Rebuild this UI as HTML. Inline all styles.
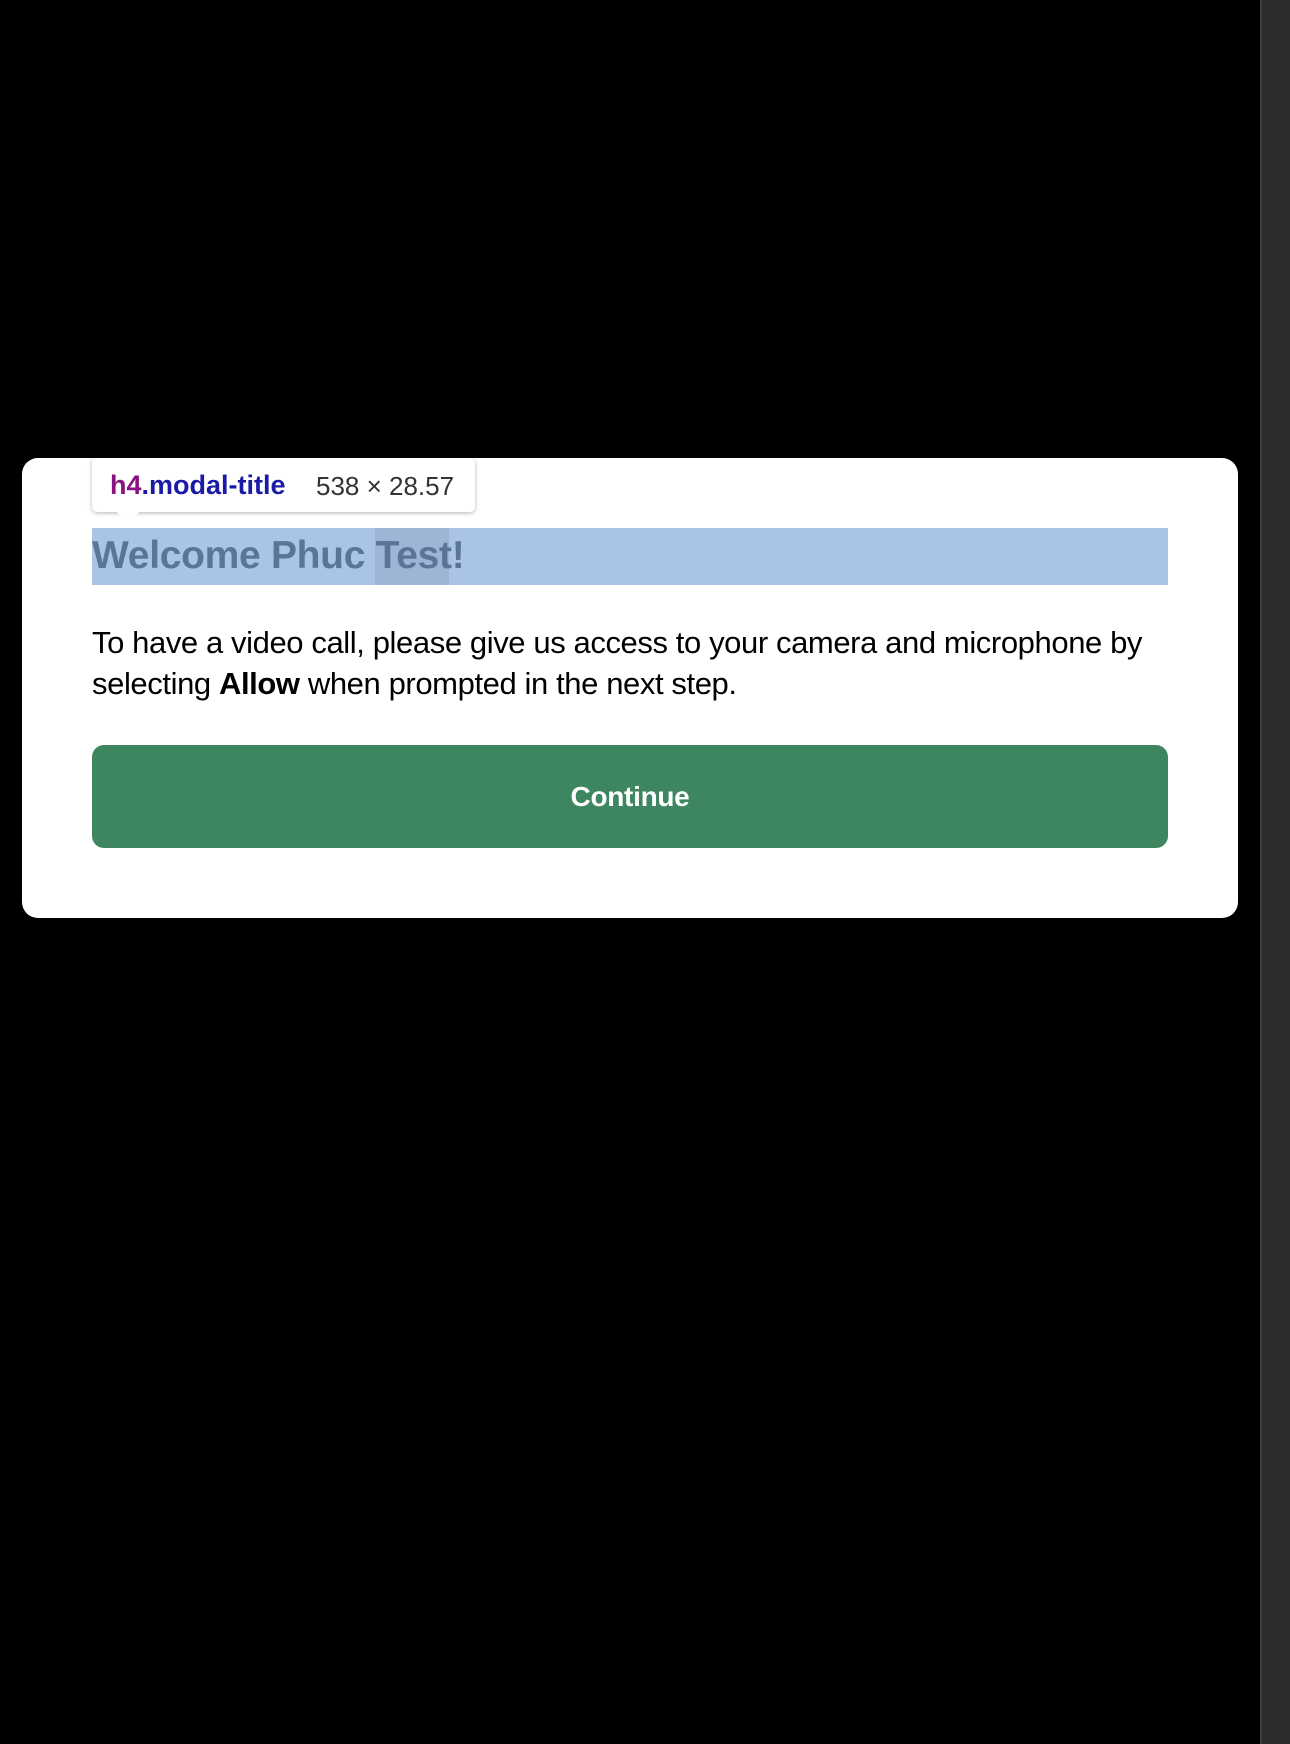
<!DOCTYPE html>
<html><head><meta charset="utf-8"><style>
html,body{margin:0;padding:0;width:1290px;height:1744px;background:#000;overflow:hidden;font-family:"Liberation Sans",sans-serif;}
.sb{position:absolute;left:1260px;top:0;width:30px;height:1744px;background:#2c2c2c;border-left:2px solid #3c3c3c;box-sizing:border-box;}
.modal{position:absolute;left:22px;top:458px;width:1216px;height:460px;background:#fff;border-radius:16px;}
.hl{position:absolute;left:92px;top:528px;width:1076px;height:57px;background:#a9c4e5;}
.hl2{position:absolute;left:375px;top:528px;width:74px;height:57px;background:#9db6d6;}
.title{position:absolute;left:92px;top:534px;font-size:39px;font-weight:bold;color:#5b7596;white-space:nowrap;letter-spacing:-0.3px;}
.tip{position:absolute;left:92px;top:458px;width:383px;height:54px;background:#fff;border-radius:5px;box-shadow:0 1px 4px rgba(0,0,0,0.3);}
.tip span{position:absolute;top:12px;white-space:nowrap;}
.arrow{position:absolute;left:116px;top:511px;width:0;height:0;border-left:12px solid transparent;border-right:12px solid transparent;border-top:15px solid #fff;}
.body{position:absolute;left:92px;top:622px;width:1140px;font-size:31px;line-height:41px;color:#000;letter-spacing:-0.4px;}
.btn{position:absolute;left:92px;top:745px;width:1076px;height:103px;background:#3e8660;border-radius:12px;color:#fff;font-weight:bold;font-size:28px;text-align:center;line-height:103px;letter-spacing:-0.3px;}
</style></head><body>
<div class="sb"></div>
<div class="modal"></div>
<div class="hl"></div>
<div class="hl2"></div>
<div class="title">Welcome Phuc Test!</div>
<div class="tip"><span style="left:18px;font-weight:bold;font-size:27px;"><span style="position:static;color:#881280">h4</span><span style="position:static;color:#1a1aa6">.modal-title</span></span><span style="left:224px;color:#333;font-size:26px;top:13px;">538 × 28.57</span></div>
<div class="arrow"></div>
<div class="body">To have a video call, please give us access to your camera and microphone by<br>selecting <b>Allow</b> when prompted in the next step.</div>
<div class="btn">Continue</div>
</body></html>
